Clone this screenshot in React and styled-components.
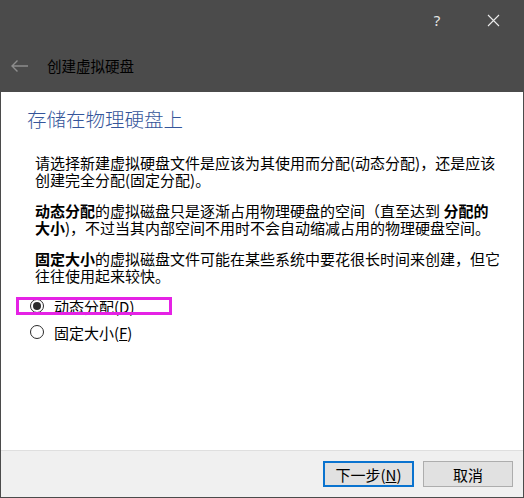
import React from "react";
import styled, { createGlobalStyle } from "styled-components";

const GlobalStyle = createGlobalStyle`
  html, body {
    margin: 0;
    padding: 0;
    background: #4b4b4b;
  }
  body {
    font-family: "Noto Sans CJK SC", "Noto Sans", sans-serif;
    color: #000;
  }
`;

const Window = styled.div`
  width: 524px;
  height: 498px;
  box-sizing: border-box;
  display: flex;
  flex-direction: column;
  background: #4b4b4b;
  padding: 0 1px 1px 1px;
`;

const Header = styled.div`
  height: 92px;
  display: flex;
  flex-direction: column;
  flex-shrink: 0;
`;

const TitleBar = styled.div`
  height: 40px;
  display: flex;
  justify-content: flex-end;
  align-items: center;
  gap: 16px;
  padding-right: 10px;
`;

const CaptionButton = styled.div`
  width: 40px;
  height: 30px;
  display: flex;
  align-items: center;
  justify-content: center;
  color: #e6e6e6;
  font-family: "Noto Sans", "DejaVu Sans", sans-serif;
  font-size: 15px;
`;

const NavRow = styled.div`
  flex: 1;
  display: flex;
  align-items: center;
  padding-left: 9px;
  gap: 18px;
`;

const NavTitle = styled.span`
  font-size: 14.5px;
  color: #000;
  line-height: 1;
`;

const Content = styled.div`
  flex: 1;
  background: #fff;
  display: flex;
  flex-direction: column;
`;

const PageTitle = styled.h1`
  margin: 16px 0 0 26px;
  font-size: 19.5px;
  line-height: 22px;
  font-weight: 300;
  color: #34559a;
`;

const Body = styled.div`
  padding-left: 34px;
  margin-top: 24px;
  display: flex;
  flex-direction: column;
  gap: 14px;
`;

const Para = styled.p`
  margin: 0;
  font-size: 15px;
  line-height: 17px;
  white-space: nowrap;

  b {
    font-weight: bold;
  }
`;

const Options = styled.div`
  margin-top: 13px;
  display: flex;
  flex-direction: column;
  gap: 8px;
`;

const RadioRow = styled.label`
  margin-left: 15px;
  width: 156px;
  height: 18px;
  box-sizing: border-box;
  display: flex;
  align-items: center;
  padding-left: 14px;
  gap: 10px;
  font-size: 15px;
  outline: ${(p) => (p.$highlight ? "3px solid #e522e5" : "none")};
  outline-offset: -3px;
`;

const RadioCircle = styled.span`
  width: 14px;
  height: 14px;
  flex-shrink: 0;
  box-sizing: border-box;
  border-radius: 50%;
  border: 1.3px solid #2b2b2b;
  background: #fff;
  display: flex;
  align-items: center;
  justify-content: center;

  &::after {
    content: "";
    width: 8px;
    height: 8px;
    border-radius: 50%;
    background: ${(p) => (p.$checked ? "#2b2b2b" : "transparent")};
  }
`;

const Footer = styled.div`
  height: 46px;
  flex-shrink: 0;
  background: #f0f0f0;
  border-top: 1px solid #dfdfdf;
  display: flex;
  justify-content: flex-end;
  align-items: center;
  gap: 9px;
  padding-right: 10px;
`;

const Button = styled.button`
  width: ${(p) => p.$width}px;
  height: 26px;
  box-sizing: border-box;
  background: #e1e1e1;
  border: ${(p) => (p.$default ? "2px solid #0a73cf" : "1px solid #adadad")};
  font-family: "Noto Sans CJK SC", "Noto Sans", sans-serif;
  font-size: 15px;
  color: #000;
  padding: 0;
  line-height: 1;
`;

export default function App() {
  return (
    <>
      <GlobalStyle />
      <Window>
        <Header>
          <TitleBar>
            <CaptionButton>?</CaptionButton>
            <CaptionButton>
              <svg width="13" height="13" viewBox="0 0 13 13">
                <path d="M1 1 L12 12 M12 1 L1 12" stroke="#ececec" strokeWidth="1.1" fill="none" />
              </svg>
            </CaptionButton>
          </TitleBar>
          <NavRow>
            <svg width="19" height="14" viewBox="0 0 19 14">
              <path
                d="M18 7 H2 M7.5 1.5 L2 7 L7.5 12.5"
                stroke="#8d8d8d"
                strokeWidth="1.4"
                fill="none"
              />
            </svg>
            <NavTitle>创建虚拟硬盘</NavTitle>
          </NavRow>
        </Header>
        <Content>
          <PageTitle>存储在物理硬盘上</PageTitle>
          <Body>
            <Para>
              请选择新建虚拟硬盘文件是应该为其使用而分配(动态分配)，还是应该
              <br />
              创建完全分配(固定分配)。
            </Para>
            <Para>
              <b>动态分配</b>的虚拟磁盘只是逐渐占用物理硬盘的空间（直至达到 <b>分配的</b>
              <br />
              <b>大小</b>)，不过当其内部空间不用时不会自动缩减占用的物理硬盘空间。
            </Para>
            <Para>
              <b>固定大小</b>的虚拟磁盘文件可能在某些系统中要花很长时间来创建，但它
              <br />
              往往使用起来较快。
            </Para>
          </Body>
          <Options>
            <RadioRow $highlight>
              <RadioCircle $checked />
              <span>
                动态分配(<u>D</u>)
              </span>
            </RadioRow>
            <RadioRow>
              <RadioCircle />
              <span>
                固定大小(<u>F</u>)
              </span>
            </RadioRow>
          </Options>
        </Content>
        <Footer>
          <Button $width={91} $default>
            下一步(<u>N</u>)
          </Button>
          <Button $width={90}>取消</Button>
        </Footer>
      </Window>
    </>
  );
}
